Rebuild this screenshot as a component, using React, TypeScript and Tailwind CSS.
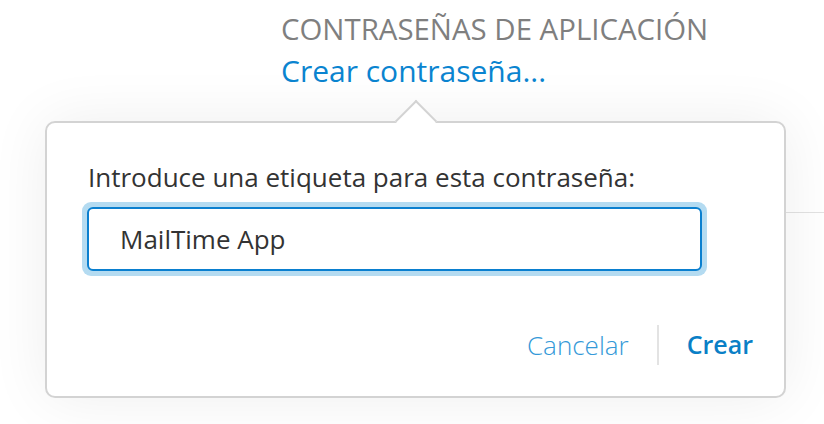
import React from "react";

const font = { fontFamily: '"Open Sans", "Liberation Sans", sans-serif' };

export default function App() {
  return (
    <div className="w-[824px] h-[424px] bg-white overflow-hidden relative" style={font}>
      <div className="pl-[281px] pt-[10px]">
        <h3 className="text-[29.4px] leading-[38px] text-[#7f7f7f]">CONTRASEÑAS DE APLICACIÓN</h3>
        <a className="block text-[30px] leading-[42px] text-[#0a84d0] mt-[2px]">Crear contraseña...</a>
      </div>

      <div className="flex items-start mt-[29px]">
        <div className="ml-[45px] w-[741px] h-[277px] relative rounded-[10px] border-2 border-[#d3d3d3] bg-white shadow-[0_0_60px_rgba(0,0,0,0.07)]">
          {/* arrow */}
          <div className="absolute left-[354px] -top-[17px] w-[30px] h-[30px] rotate-45 bg-white border-l-2 border-t-2 border-[#d3d3d3]" />
          <div className="pt-[36px] px-[41px]">
            <p className="text-[26px] leading-[36px] text-[#333]">Introduce una etiqueta para esta contraseña:</p>
            <div className="mt-[7px] -ml-[6px] w-[625px] rounded-[9px] p-[5px] bg-[#b4dbf1]">
              <div className="h-[64px] rounded-[6px] border-2 border-[#0a7fcf] bg-white flex items-center pl-[31px]">
                <span className="text-[26px] text-[#333]">MailTime App</span>
              </div>
            </div>
          </div>
          <div className="flex justify-end items-center pr-[31px] mt-[49px]">
            <button className="text-[26px] font-light text-[#3499d8]">Cancelar</button>
            <div className="w-[2px] h-[40px] bg-[#e3e3e3] mx-[28px]" />
            <button className="text-[25px] font-semibold text-[#0a7fc6]">Crear</button>
          </div>
        </div>
        <div className="flex-1 h-px bg-[#e2e2e2] mt-[91px]" />
      </div>
    </div>
  );
}
